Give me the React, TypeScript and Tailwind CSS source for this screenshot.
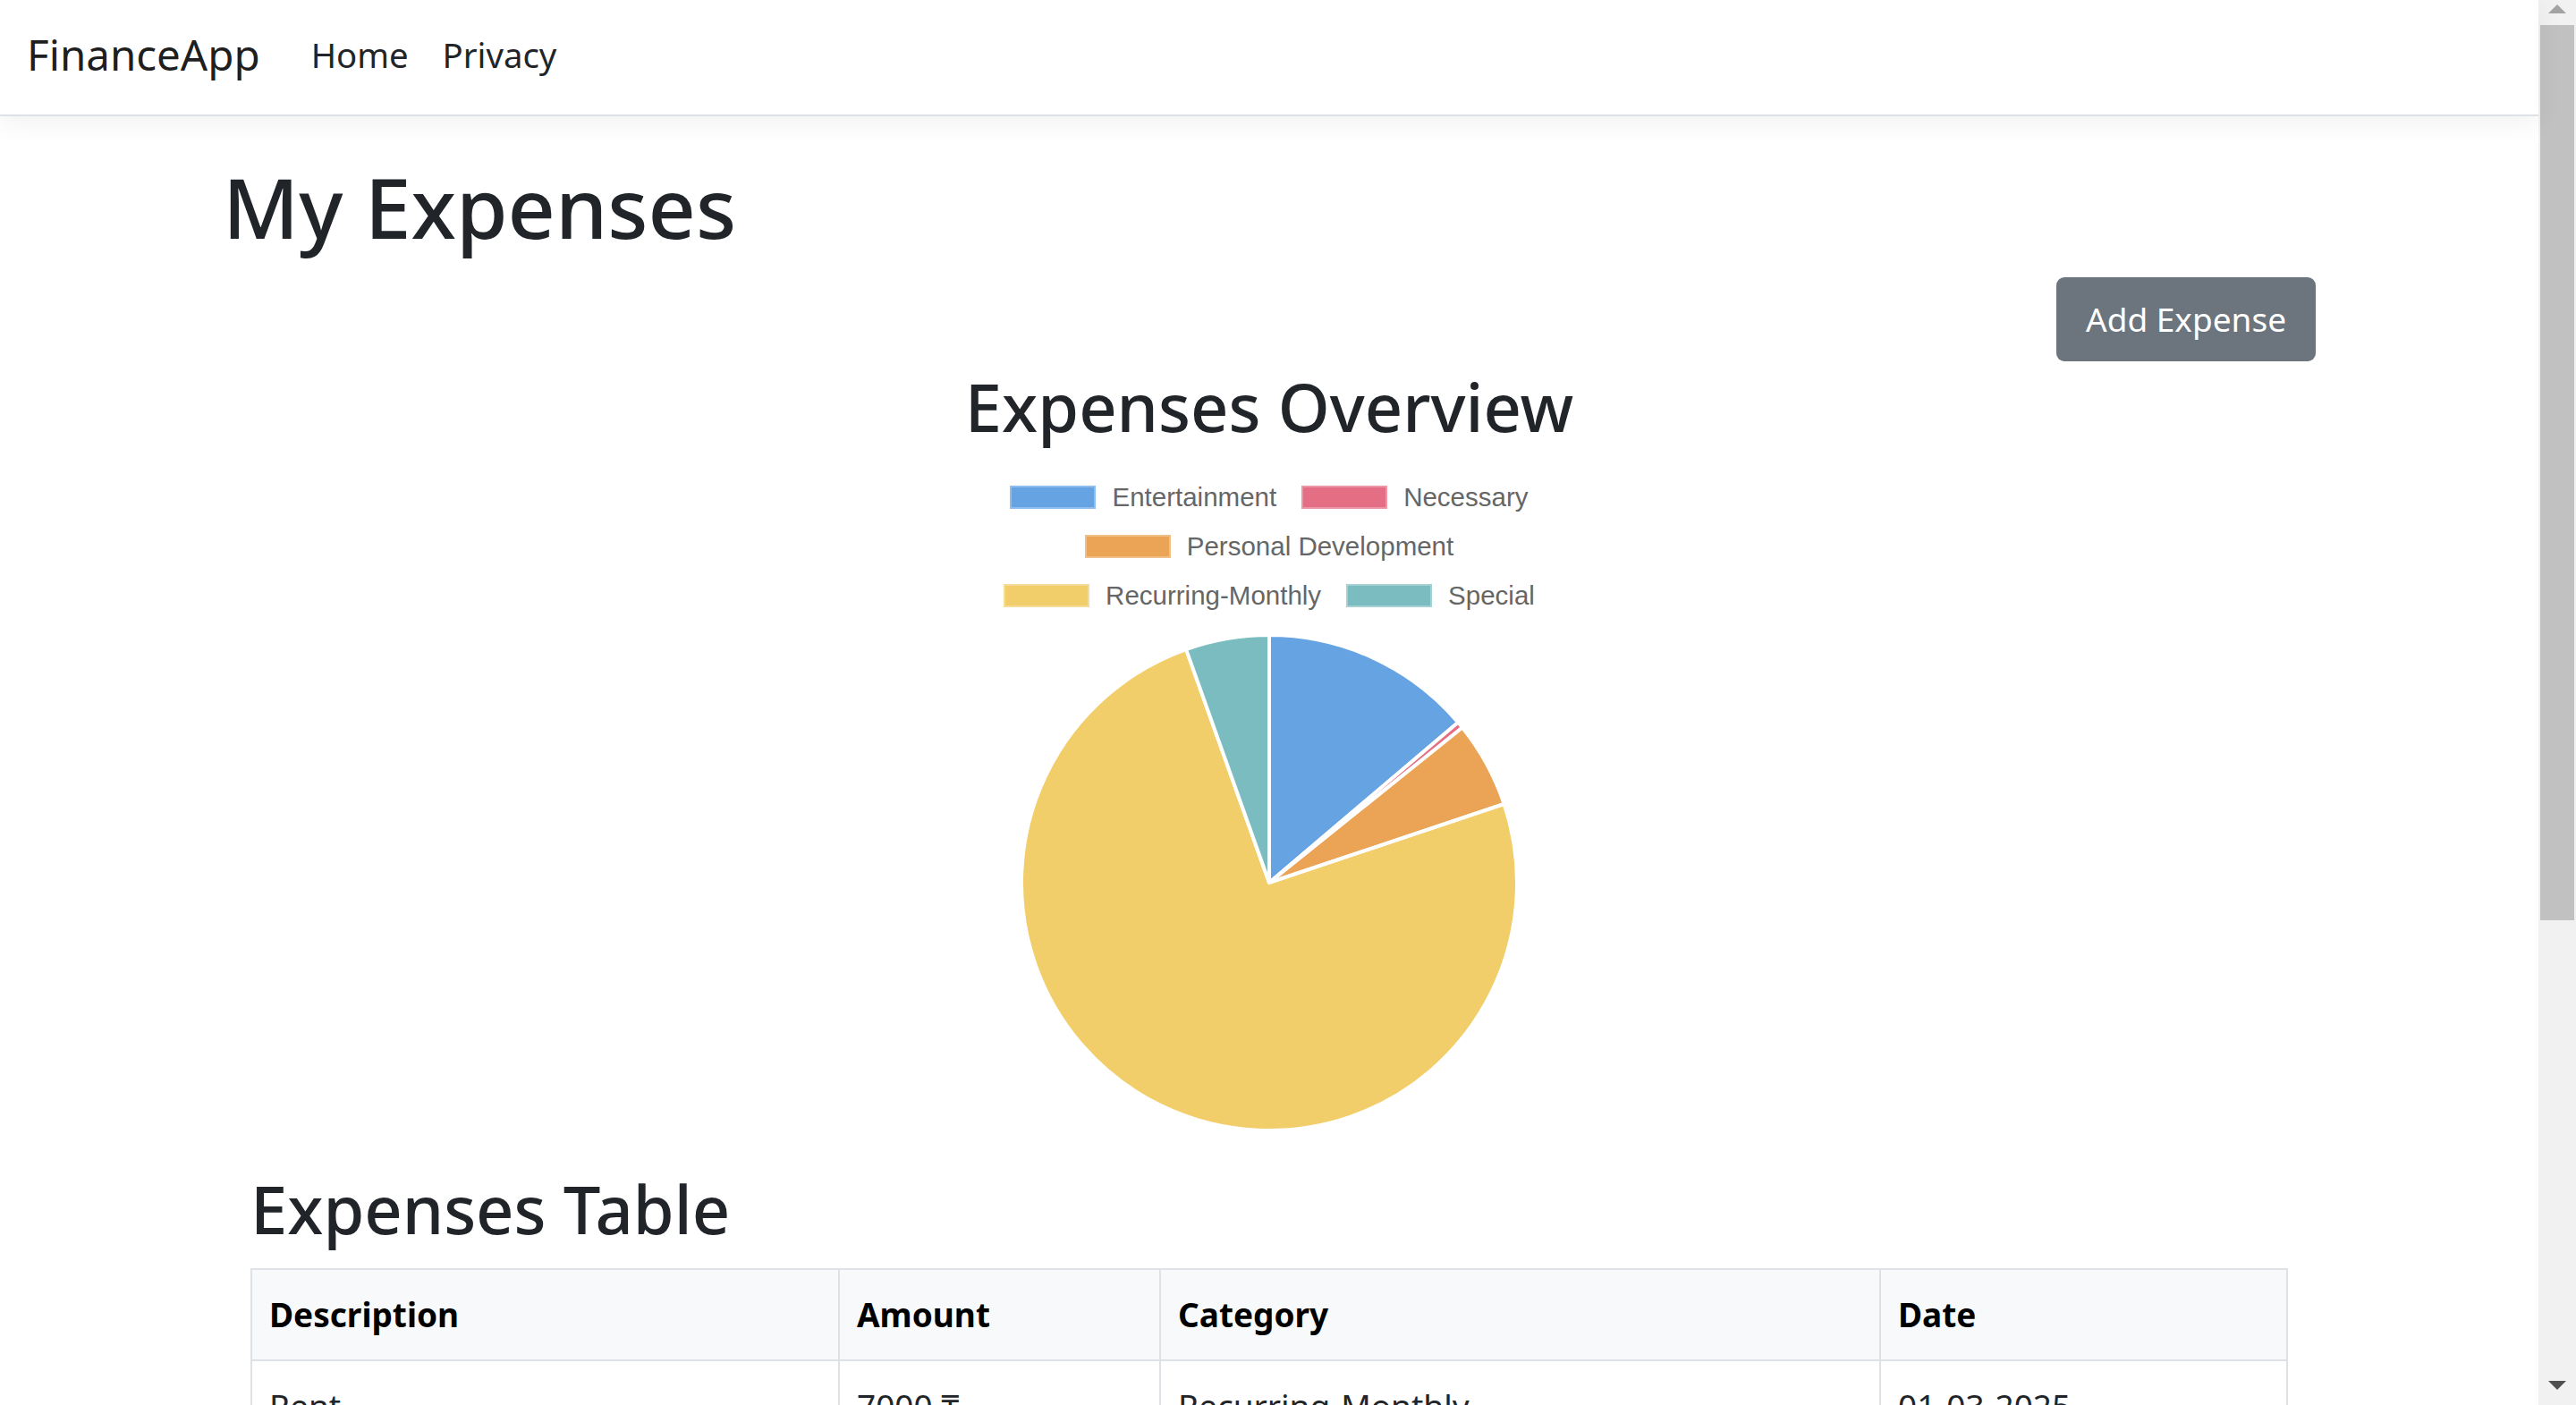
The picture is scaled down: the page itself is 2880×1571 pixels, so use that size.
import React from 'react';

type Slice = {
  label: string;
  amount: number;
  fill: string;
  border: string;
};

const slices: Slice[] = [
  { label: 'Entertainment', amount: 1900, fill: '#66a3e3', border: '#8fbdee' },
  { label: 'Necessary', amount: 60, fill: '#e46e84', border: '#ec97a7' },
  { label: 'Personal Development', amount: 775, fill: '#eba355', border: '#f1c088' },
  { label: 'Recurring-Monthly', amount: 10290, fill: '#f1ce6a', border: '#f5dc98' },
  { label: 'Special', amount: 750, fill: '#7abcc0', border: '#a3d1d4' },
];

const legendRows = [
  ['Entertainment', 'Necessary'],
  ['Personal Development'],
  ['Recurring-Monthly', 'Special'],
];

const expenses = [
  { description: 'Rent', amount: '7000 ₸', category: 'Recurring-Monthly', date: '01-03-2025' },
];

function Navbar() {
  return (
    <nav className="relative z-10 flex h-[130px] shrink-0 items-center border-b-2 border-[#dee2e6] bg-white pb-[6px] pl-[30px] shadow-[0_8px_28px_rgba(0,0,0,0.06)]">
      <a className="mr-[38px] text-[47.5px] leading-none text-black/90">FinanceApp</a>
      <a className="px-[19px] text-[38.3px] leading-none text-[#212529]">Home</a>
      <a className="px-[19px] text-[38.3px] leading-none text-[#212529]">Privacy</a>
    </nav>
  );
}

function Legend() {
  return (
    <div className="mt-[34px] flex flex-col font-['Liberation_Sans',Arial,sans-serif] text-[29.5px] text-[#666666]">
      {legendRows.map((row, i) => (
        <div key={i} className="flex h-[55px] items-center justify-center gap-[28px]">
          {row.map((label) => {
            const s = slices.find((x) => x.label === label)!;
            return (
              <div key={label} className="flex items-center gap-[18px]">
                <span
                  className="block h-[26px] w-[96px] border-2"
                  style={{ backgroundColor: s.fill, borderColor: s.border }}
                />
                <span className="leading-none">{label}</span>
              </div>
            );
          })}
        </div>
      ))}
    </div>
  );
}

function PieChart() {
  const cx = 282;
  const cy = 282;
  const r = 277;
  const total = slices.reduce((sum, s) => sum + s.amount, 0);
  let start = 0;

  const point = (deg: number) => {
    const rad = (deg * Math.PI) / 180;
    return [cx + r * Math.sin(rad), cy - r * Math.cos(rad)];
  };

  return (
    <div className="mt-[12px] flex justify-center">
      <svg width={564} height={564} viewBox="0 0 564 564">
        {slices.map((s) => {
          const sweep = (s.amount / total) * 360;
          const [x1, y1] = point(start);
          const [x2, y2] = point(start + sweep);
          const large = sweep > 180 ? 1 : 0;
          const d = `M ${cx} ${cy} L ${x1} ${y1} A ${r} ${r} 0 ${large} 1 ${x2} ${y2} Z`;
          start += sweep;
          return (
            <path key={s.label} d={d} fill={s.fill} stroke="#ffffff" strokeWidth={4} strokeLinejoin="round" />
          );
        })}
      </svg>
    </div>
  );
}

function ExpensesTable() {
  const cell = 'border-2 border-[#dee2e6] px-[19px] align-middle';
  return (
    <table className="mt-[21px] w-full table-fixed border-collapse text-left text-[37px]">
      <colgroup>
        <col className="w-[657px]" />
        <col className="w-[359px]" />
        <col className="w-[805px]" />
        <col className="w-[455px]" />
      </colgroup>
      <thead>
        <tr className="h-[102px] bg-[#f8f9fa] text-black">
          <th className={`${cell} font-bold`}>Description</th>
          <th className={`${cell} font-bold`}>Amount</th>
          <th className={`${cell} font-bold`}>Category</th>
          <th className={`${cell} font-bold`}>Date</th>
        </tr>
      </thead>
      <tbody>
        {expenses.map((e, i) => (
          <tr key={i} className="h-[102px]">
            <td className={cell}>{e.description}</td>
            <td className={cell}>{e.amount}</td>
            <td className={cell}>{e.category}</td>
            <td className={cell}>{e.date}</td>
          </tr>
        ))}
      </tbody>
    </table>
  );
}

function Scrollbar() {
  return (
    <div className="flex w-[42px] shrink-0 flex-col bg-[#f1f1f1]">
      <div className="flex h-[28px] items-start justify-center pt-[5px]">
        <svg width="20" height="10" viewBox="0 0 20 10">
          <polygon points="10,0 20,10 0,10" fill="#a3a3a3" />
        </svg>
      </div>
      <div className="mx-[2px] h-[1001px] bg-[#c1c1c1]" />
      <div className="flex-1" />
      <div className="flex h-[28px] items-end justify-center pb-[17px]">
        <svg width="20" height="10" viewBox="0 0 20 10">
          <polygon points="0,0 20,0 10,10" fill="#505050" />
        </svg>
      </div>
    </div>
  );
}

export default function App() {
  return (
    <div className="flex h-screen w-full overflow-hidden bg-white font-['Noto_Sans',sans-serif] text-[#212529]">
      <div className="flex min-w-0 flex-1 flex-col">
        <Navbar />
        <main className="px-[249px]">
          <h1 className="mt-[46px] text-[93px] font-medium leading-[1.2]">My Expenses</h1>
          <div className="mt-[22px] flex justify-end">
            <button className="h-[94px] w-[290px] rounded-[9px] bg-[#6c757d] text-[37px] text-white">
              Add Expense
            </button>
          </div>
          <section className="px-[31px]">
            <h2 className="mt-[7px] text-center text-[74px] font-medium leading-[1.2]">Expenses Overview</h2>
            <div className="-mt-[5px]">
              <Legend />
            </div>
            <PieChart />
            <h2 className="mt-[39px] text-[74px] font-medium leading-[1.2]">Expenses Table</h2>
            <ExpensesTable />
          </section>
        </main>
      </div>
      <Scrollbar />
    </div>
  );
}
